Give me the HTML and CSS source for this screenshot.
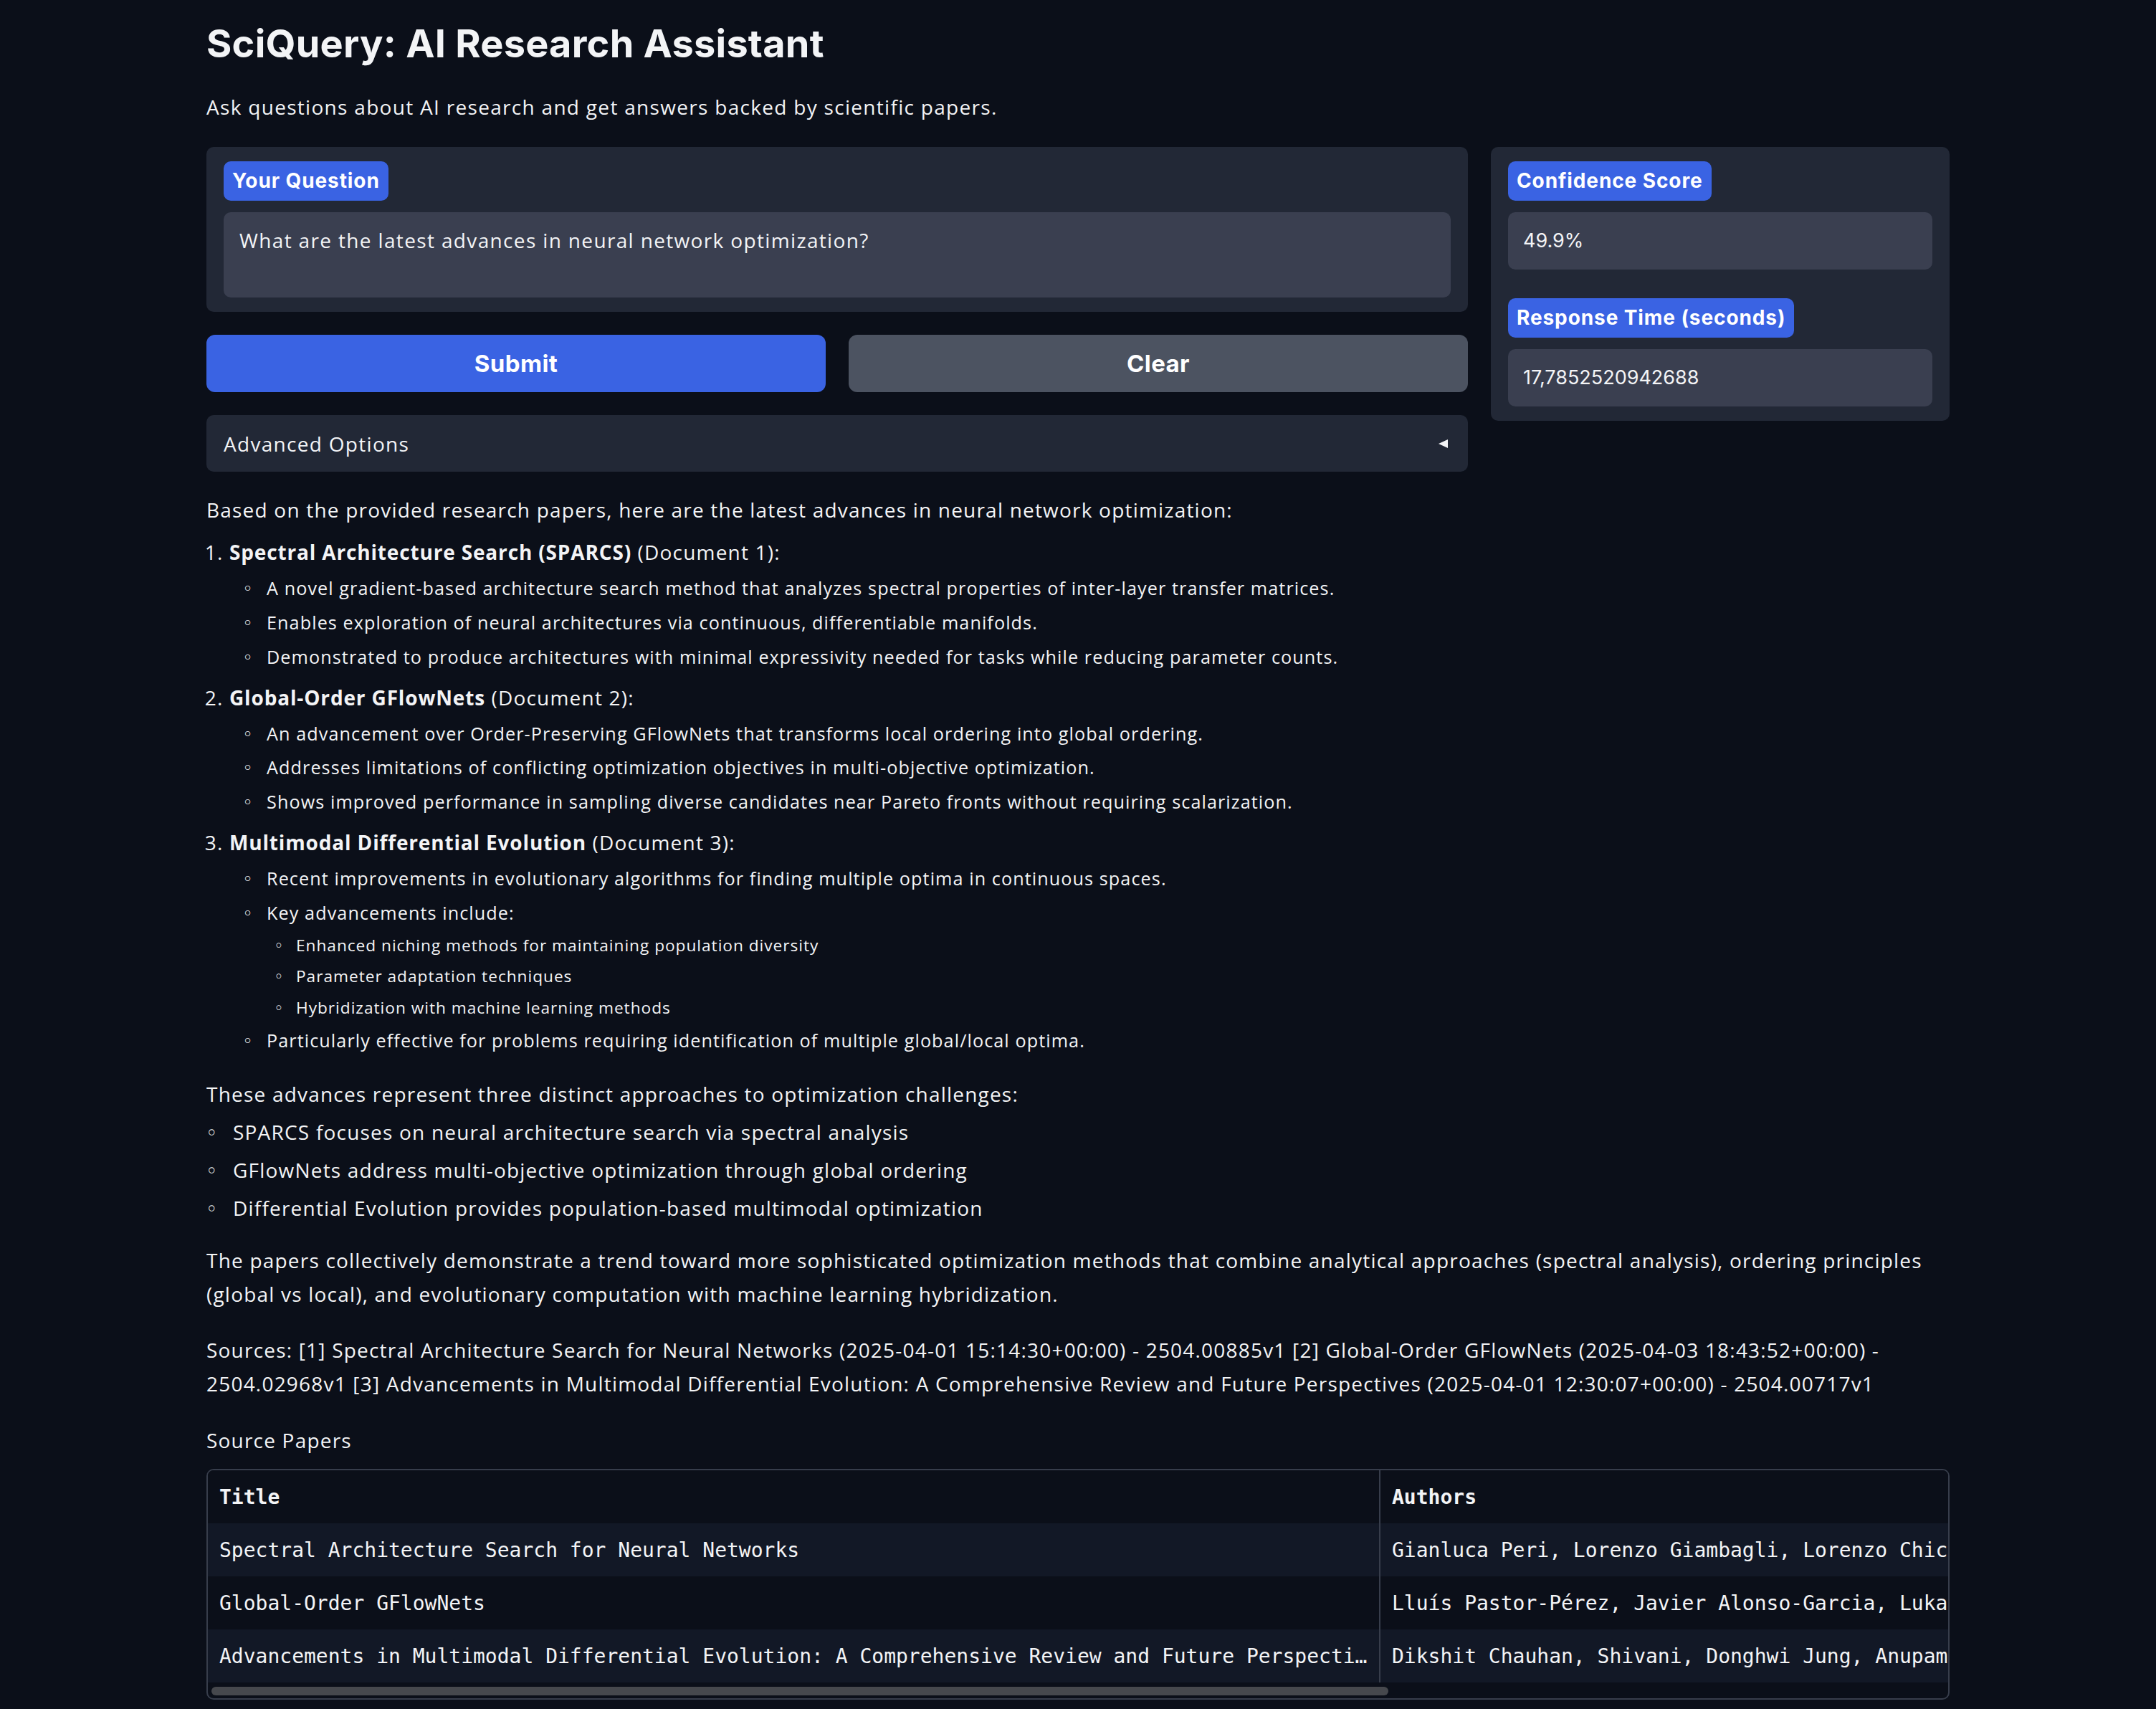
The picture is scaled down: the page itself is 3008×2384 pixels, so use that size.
FILE: index.html
```html
<!DOCTYPE html>
<html lang="en">
<head>
<meta charset="utf-8">
<title>SciQuery: AI Research Assistant</title>
<link rel="stylesheet" href="styles.css">
</head>
<body>
<div class="app">
  <h1 class="title">SciQuery: AI Research Assistant</h1>
  <p class="subtitle">Ask questions about AI research and get answers backed by scientific papers.</p>

  <div class="top-row">
    <div class="left-col">
      <div class="panel">
        <span class="label">Your Question</span>
        <div class="textarea">What are the latest advances in neural network optimization?</div>
      </div>
      <div class="btn-row">
        <button class="btn btn-primary">Submit</button>
        <button class="btn btn-secondary">Clear</button>
      </div>
      <div class="accordion">
        <span>Advanced Options</span>
        <span class="caret"></span>
      </div>
    </div>
    <div class="panel right-panel">
      <span class="label">Confidence Score</span>
      <div class="value-box">49.9%</div>
      <span class="label label-gap">Response Time (seconds)</span>
      <div class="value-box">17,7852520942688</div>
    </div>
  </div>

  <div class="prose">
    <p>Based on the provided research papers, here are the latest advances in neural network optimization:</p>
    <ol>
      <li><strong>Spectral Architecture Search (SPARCS)</strong> (Document 1):
        <ul>
          <li>A novel gradient-based architecture search method that analyzes spectral properties of inter-layer transfer matrices.</li>
          <li>Enables exploration of neural architectures via continuous, differentiable manifolds.</li>
          <li>Demonstrated to produce architectures with minimal expressivity needed for tasks while reducing parameter counts.</li>
        </ul>
      </li>
      <li><strong>Global-Order GFlowNets</strong> (Document 2):
        <ul>
          <li>An advancement over Order-Preserving GFlowNets that transforms local ordering into global ordering.</li>
          <li>Addresses limitations of conflicting optimization objectives in multi-objective optimization.</li>
          <li>Shows improved performance in sampling diverse candidates near Pareto fronts without requiring scalarization.</li>
        </ul>
      </li>
      <li><strong>Multimodal Differential Evolution</strong> (Document 3):
        <ul>
          <li>Recent improvements in evolutionary algorithms for finding multiple optima in continuous spaces.</li>
          <li>Key advancements include:
            <ul>
              <li>Enhanced niching methods for maintaining population diversity</li>
              <li>Parameter adaptation techniques</li>
              <li>Hybridization with machine learning methods</li>
            </ul>
          </li>
          <li>Particularly effective for problems requiring identification of multiple global/local optima.</li>
        </ul>
      </li>
    </ol>
    <p class="after-list">These advances represent three distinct approaches to optimization challenges:</p>
    <ul class="top-ul">
      <li>SPARCS focuses on neural architecture search via spectral analysis</li>
      <li>GFlowNets address multi-objective optimization through global ordering</li>
      <li>Differential Evolution provides population-based multimodal optimization</li>
    </ul>
    <p class="para-gap">The papers collectively demonstrate a trend toward more sophisticated optimization methods that combine analytical approaches (spectral analysis), ordering principles (global vs local), and evolutionary computation with machine learning hybridization.</p>
    <p class="sources">Sources: [1] Spectral Architecture Search for Neural Networks (2025-04-01 15:14:30+00:00) - 2504.00885v1 [2] Global-Order GFlowNets (2025-04-03 18:43:52+00:00) - 2504.02968v1 [3] Advancements in Multimodal Differential Evolution: A Comprehensive Review and Future Perspectives (2025-04-01 12:30:07+00:00) - 2504.00717v1</p>
  </div>

  <div class="source-label">Source Papers</div>
  <div class="table-frame">
    <div class="table-clip">
      <table class="papers">
        <colgroup><col class="c-title"><col class="c-authors"></colgroup>
        <thead>
          <tr><th>Title</th><th>Authors</th></tr>
        </thead>
        <tbody>
          <tr><td><div class="cell">Spectral Architecture Search for Neural Networks</div></td><td><div class="cell">Gianluca Peri, Lorenzo Giambagli, Lorenzo Chicchi, Duccio Fanelli</div></td></tr>
          <tr><td><div class="cell">Global-Order GFlowNets</div></td><td><div class="cell">Lluís Pastor-Pérez, Javier Alonso-Garcia, Lukas Mauch</div></td></tr>
          <tr><td><div class="cell">Advancements in Multimodal Differential Evolution: A Comprehensive Review and Future Perspectives</div></td><td><div class="cell">Dikshit Chauhan, Shivani, Donghwi Jung, Anupam Yadav</div></td></tr>
        </tbody>
      </table>
    </div>
    <div class="scroll-track"><div class="scroll-thumb"></div></div>
  </div>
</div>
</body>
</html>
```

FILE: styles.css
```css
* { box-sizing: border-box; }

body {
  margin: 0;
  background: #0b0f19;
  color: #f3f4f6;
  font-family: "Open Sans", "Noto Sans", sans-serif;
}

.app {
  width: 2432px;
  margin: 0 auto;
  padding-top: 29px;
}

.title {
  margin: 0;
  font-family: Inter, "Noto Sans", sans-serif;
  font-weight: 700;
  font-size: 54px;
  line-height: 64px;
  letter-spacing: 0.25px;
}

.subtitle {
  margin: 36px 0 0;
  font-size: 28px;
  line-height: 40px;
  letter-spacing: 1.3px;
}

.top-row {
  margin-top: 36px;
  display: grid;
  grid-template-columns: 1760px 640px;
  gap: 32px;
  align-items: start;
}

.left-col {
  display: flex;
  flex-direction: column;
  gap: 32px;
}

.panel {
  background: #222836;
  border-radius: 10px;
  padding: 20px 24px;
  display: flex;
  flex-direction: column;
  align-items: flex-start;
}

.label {
  background: #3a63e3;
  color: #fff;
  font-family: Inter, "Noto Sans", sans-serif;
  font-weight: 700;
  font-size: 28px;
  letter-spacing: 0.9px;
  height: 55px;
  line-height: 55px;
  padding: 0 12px;
  border-radius: 10px;
}

.label-gap { margin-top: 40px; }

.textarea {
  margin-top: 16px;
  width: 100%;
  height: 119px;
  background: #3a3f50;
  border-radius: 10px;
  padding: 19px 22px;
  font-size: 28px;
  letter-spacing: 1.35px;
  line-height: 40px;
}

.value-box {
  margin-top: 16px;
  width: 100%;
  height: 80px;
  background: #3a3f50;
  border-radius: 10px;
  padding: 0 21px;
  font-family: Inter, "Noto Sans", sans-serif;
  font-size: 27px;
  line-height: 80px;
}

.btn-row {
  display: grid;
  grid-template-columns: 1fr 1fr;
  gap: 32px;
}

.btn {
  height: 80px;
  border: none;
  border-radius: 12px;
  color: #fff;
  font-family: Inter, "Noto Sans", sans-serif;
  font-weight: 700;
  font-size: 33px;
  letter-spacing: 0.4px;
}

.btn-primary { background: #3a63e3; }
.btn-secondary { background: #4c5361; }

.accordion {
  height: 79px;
  background: #222836;
  border-radius: 10px;
  padding: 0 28px 0 24px;
  display: flex;
  align-items: center;
  justify-content: space-between;
  font-size: 28px;
  letter-spacing: 1.3px;
}

.caret {
  width: 0;
  height: 0;
  border-top: 6px solid transparent;
  border-bottom: 6px solid transparent;
  border-right: 13px solid #f3f4f6;
}

.prose {
  margin-top: 30px;
  font-size: 28px;
  line-height: 47px;
}

.prose,
.prose ul {
  letter-spacing: 0.043em;
}

.prose p { margin: 0; }
.prose strong { font-weight: 700; letter-spacing: 0.03em; }

.prose ol {
  margin: 12px 0 0;
  padding-left: 32px;
}

.prose ol > li + li { margin-top: 12px; }

.prose ul li { margin: 5px 0 0; }

.prose ul li::marker {
  content: "\25E6\00a0\00a0";
  font-family: "DejaVu Sans", sans-serif;
  font-size: 1em;
}

.prose ol > li > ul {
  margin: 0;
  padding-left: 52px;
  font-size: 0.9em;
  line-height: 1.7;
}

.prose ul ul {
  margin: 0;
  padding-left: 41px;
  font-size: 0.9em;
}

.prose .after-list { margin-top: 30px; }

.prose .top-ul {
  margin: 4px 0 0;
  padding-left: 37px;
}

.prose .top-ul li { margin-top: 6px; }

.prose .para-gap { margin-top: 26px; }
.prose .sources { margin-top: 31px; }

.source-label {
  margin-top: 35px;
  font-size: 28px;
  letter-spacing: 1.2px;
  line-height: 40px;
}

.table-frame {
  margin-top: 20px;
  border: 2px solid #373d4b;
  border-radius: 10px;
  overflow: hidden;
}

.table-clip {
  overflow: hidden;
}

.papers {
  border-collapse: collapse;
  table-layout: fixed;
  width: 3270px;
  font-family: "DejaVu Sans Mono", "Liberation Mono", monospace;
  font-size: 28px;
}

.c-title { width: 1635px; }
.c-authors { width: 1635px; }

.papers th,
.papers td {
  height: 74px;
  padding: 0 16px;
  text-align: left;
  vertical-align: middle;
}

.papers th {
  font-weight: 700;
  background: #0b0f19;
}

.papers th + th,
.papers td + td {
  border-left: 2px solid #373d4b;
}

.papers tbody tr:nth-child(odd) td { background: #121826; }
.papers tbody tr:nth-child(even) td { background: #0b0f19; }

.cell {
  white-space: nowrap;
  overflow: hidden;
  text-overflow: ellipsis;
}

.scroll-track {
  height: 22px;
  padding: 6px 0 4px 5px;
}

.scroll-thumb {
  width: 1642px;
  height: 12px;
  border-radius: 6px;
  background: #46484d;
}
```
